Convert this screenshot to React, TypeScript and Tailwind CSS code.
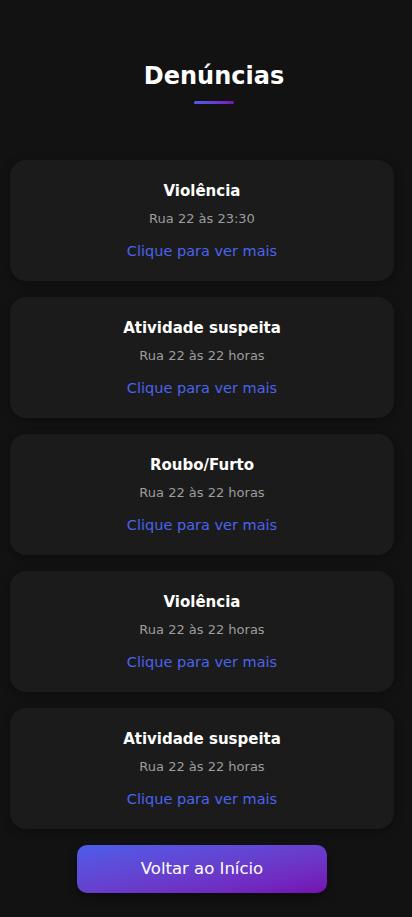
const denuncias = [
  { titulo: 'Violência', info: 'Rua 22 às 23:30' },
  { titulo: 'Atividade suspeita', info: 'Rua 22 às 22 horas' },
  { titulo: 'Roubo/Furto', info: 'Rua 22 às 22 horas' },
  { titulo: 'Violência', info: 'Rua 22 às 22 horas' },
  { titulo: 'Atividade suspeita', info: 'Rua 22 às 22 horas' },
]

function DenunciaCard({ titulo, info }: { titulo: string; info: string }) {
  return (
    <div className="flex h-[121px] flex-col items-center rounded-2xl bg-[#1b1b1b] px-4 pt-5 shadow-[0_2px_8px_rgba(0,0,0,0.35)]">
      <h2 className="text-[15px] font-bold leading-[22px] text-white">{titulo}</h2>
      <p className="mt-[7px] text-[13px] leading-5 text-[#9d9d9d]">{info}</p>
      <a className="mt-3 cursor-pointer text-[14.5px] leading-5 text-[#4b63ee]">Clique para ver mais</a>
    </div>
  )
}

export default function App() {
  return (
    <div
      className="flex min-h-[917px] flex-col bg-[#121212] pb-6 pl-[10px] pr-[18px] pt-[60px]"
      style={{ fontFamily: '"DejaVu Sans", "Noto Sans", sans-serif' }}
    >
      <div className="ml-6 flex flex-col items-center">
        <h1 className="text-center text-[24px] font-bold leading-8 text-white">Denúncias</h1>
        <div className="mt-[9px] h-[3px] w-10 rounded-full bg-gradient-to-r from-[#4a5ee8] to-[#7213b6]" />
      </div>
      <div className="mt-[56px] flex flex-col gap-4">
        {denuncias.map((d, i) => (
          <DenunciaCard key={i} titulo={d.titulo} info={d.info} />
        ))}
      </div>
      <button className="mx-auto mt-4 h-12 w-[250px] rounded-[10px] bg-gradient-to-br from-[#4a5de9] to-[#760db3] text-[16.5px] font-medium text-white shadow-[0_4px_10px_rgba(0,0,0,0.4)]">
        Voltar ao Início
      </button>
    </div>
  )
}
